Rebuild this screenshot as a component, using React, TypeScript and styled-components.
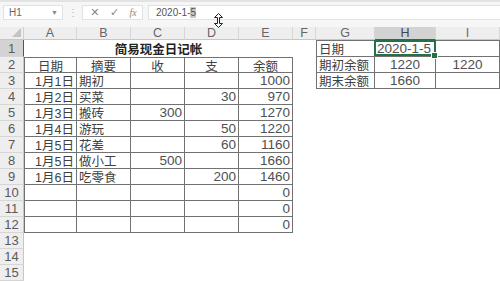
import styled, { createGlobalStyle } from 'styled-components';

const GlobalStyle = createGlobalStyle`
  html, body { margin: 0; padding: 0; background: #fff; }
  body { font-family: "Liberation Sans", "Noto Sans CJK SC", sans-serif; overflow: hidden; }
`;

const Window = styled.div`
  width: 500px;
  height: 282px;
  position: relative;
  overflow: hidden;
  background: #fff;
`;

const FormulaBar = styled.div`
  height: 27px;
  box-sizing: border-box;
  border-top: 2px solid #e3e3e3;
  background: #f6f6f6;
  display: flex;
  align-items: flex-start;
  padding: 3px 0 0 3px;
`;

const NameBox = styled.div`
  width: 60px;
  height: 15px;
  box-sizing: border-box;
  background: #fff;
  border: 1px solid #e2e2e2;
  display: flex;
  align-items: center;
  justify-content: space-between;
  padding: 0 4px 0 5px;
  font-size: 10px;
  color: #666;
`;

const Arrow = styled.span`
  font-size: 7px;
  color: #888;
`;

const Dots = styled.div`
  width: 19px;
  height: 15px;
  display: flex;
  align-items: center;
  justify-content: center;
  color: #b5b5b5;
  font-size: 10px;
`;

const ToolBox = styled.div`
  width: 61px;
  height: 15px;
  box-sizing: border-box;
  background: #fff;
  border: 1px solid #e2e2e2;
  display: flex;
  align-items: center;
  justify-content: space-around;
  padding-left: 2px;
  color: #888;
`;

const ToolIcon = styled.span<{ $serif?: boolean }>`
  font-size: ${p => (p.$serif ? '10px' : '11px')};
  font-family: ${p => (p.$serif ? '"Liberation Serif", serif' : '"DejaVu Sans", sans-serif')};
  font-style: ${p => (p.$serif ? 'italic' : 'normal')};
  line-height: 1;
`;

const FormulaInput = styled.div`
  flex: 1;
  height: 15px;
  margin-left: 5px;
  box-sizing: border-box;
  background: #fff;
  border: 1px solid #e2e2e2;
  border-right: none;
  display: flex;
  align-items: center;
  padding-left: 7px;
  font-size: 10px;
  color: #555;
`;

const Selected = styled.span`
  background: #c9c9c9;
`;

const Cursor = styled.svg`
  position: absolute;
  left: 214px;
  top: 13px;
`;

const Sheet = styled.div`
  display: grid;
  grid-template-columns: 24px 53px 54px 54px 54px 54px 23px 59px 61px 64px;
  grid-template-rows: 13px 17px repeat(14, 16px);
`;

const Corner = styled.div`
  background: #eeeeee;
  border-right: 1px solid #d0d0d0;
  border-bottom: 1px solid #c6c6c6;
  box-sizing: border-box;
  display: flex;
  align-items: flex-end;
  justify-content: flex-end;
  padding: 0 2px 2px 0;
`;

const ColHead = styled.div<{ $active?: boolean }>`
  box-sizing: border-box;
  background: ${p => (p.$active ? '#d3d3d3' : '#eeeeee')};
  border-right: 1px solid #d6d6d6;
  border-bottom: 1px solid ${p => (p.$active ? '#217346' : '#c6c6c6')};
  font-size: 12.5px;
  line-height: 12px;
  color: ${p => (p.$active ? '#444' : '#666')};
  text-align: center;
`;

const RowHead = styled.div<{ $active?: boolean }>`
  box-sizing: border-box;
  background: ${p => (p.$active ? '#d3d3d3' : '#eeeeee')};
  border-bottom: 1px solid #d6d6d6;
  border-right: 1px solid ${p => (p.$active ? '#217346' : '#c6c6c6')};
  font-size: 13px;
  color: #5a5a5a;
  display: flex;
  align-items: center;
  justify-content: center;
`;

type Align = 'left' | 'right' | 'center';

const Cell = styled.div<{
  $align?: Align;
  $boxed?: boolean;
  $top?: boolean;
  $left?: boolean;
  $span?: number;
  $bold?: boolean;
  $num?: boolean;
  $active?: boolean;
}>`
  position: relative;
  box-sizing: border-box;
  grid-column: ${p => (p.$span ? `span ${p.$span}` : 'auto')};
  border-right: ${p => (p.$boxed ? '1px solid #727272' : 'none')};
  border-bottom: ${p => (p.$boxed ? '1px solid #727272' : 'none')};
  border-top: ${p => (p.$top ? '1px solid #727272' : 'none')};
  border-left: ${p => (p.$left ? '1px solid #727272' : 'none')};
  display: flex;
  align-items: center;
  justify-content: ${p => (p.$align === 'right' ? 'flex-end' : p.$align === 'center' ? 'center' : 'flex-start')};
  padding: 0 2px;
  font-size: ${p => (p.$num ? '13.5px' : '12.5px')};
  font-weight: ${p => (p.$bold ? 700 : 400)};
  color: ${p => (p.$bold ? '#222' : p.$num ? '#505050' : '#404040')};
  white-space: nowrap;
  ${p =>
    p.$active &&
    `
    &::after {
      content: '';
      position: absolute;
      inset: -1px -1px 0 -1px;
      border: 2px solid #217346;
      pointer-events: none;
    }
    &::before {
      content: '';
      position: absolute;
      right: -3px;
      bottom: -3px;
      width: 5px;
      height: 5px;
      background: #217346;
      border: 1px solid #fff;
      z-index: 2;
    }
  `}
`;

const columns = ['A', 'B', 'C', 'D', 'E', 'F', 'G', 'H', 'I'];

const ledger: string[][] = [
  ['1月1日', '期初', '', '', '1000'],
  ['1月2日', '买菜', '', '30', '970'],
  ['1月3日', '搬砖', '300', '', '1270'],
  ['1月4日', '游玩', '', '50', '1220'],
  ['1月5日', '花差', '', '60', '1160'],
  ['1月5日', '做小工', '500', '', '1660'],
  ['1月6日', '吃零食', '', '200', '1460'],
  ['', '', '', '', '0'],
  ['', '', '', '', '0'],
  ['', '', '', '', '0'],
];

const summary: { label: string; h: string; i: string }[] = [
  { label: '日期', h: '2020-1-5', i: '' },
  { label: '期初余额', h: '1220', i: '1220' },
  { label: '期末余额', h: '1660', i: '' },
];

const ledgerAlign: Align[] = ['right', 'left', 'right', 'right', 'right'];
const headers = ['日期', '摘要', '收', '支', '余额'];

function SideCells({ row }: { row: number }) {
  const s = summary[row];
  if (!s) {
    return (
      <>
        <Cell />
        <Cell />
        <Cell />
      </>
    );
  }
  return (
    <>
      <Cell $boxed $left $top={row === 0} $align="left">{s.label}</Cell>
      <Cell $boxed $num $top={row === 0} $align={row === 0 ? 'left' : 'center'} $active={row === 0}>
        {s.h}
      </Cell>
      <Cell $boxed $num $top={row === 0} $align="center">{s.i}</Cell>
    </>
  );
}

export default function App() {
  const rows = [];
  for (let r = 1; r <= 15; r++) {
    let ledgerCells;
    if (r === 1) {
      ledgerCells = (
        <Cell $span={5} $align="center" $bold>
          简易现金日记帐
        </Cell>
      );
    } else if (r === 2) {
      ledgerCells = headers.map((h, i) => (
        <Cell key={h} $boxed $top $left={i === 0} $align="center">
          {h}
        </Cell>
      ));
    } else if (r <= 12) {
      ledgerCells = ledger[r - 3].map((v, i) => (
        <Cell key={i} $boxed $num={i >= 2} $left={i === 0} $align={ledgerAlign[i]}>
          {v}
        </Cell>
      ));
    } else {
      ledgerCells = [0, 1, 2, 3, 4].map(i => <Cell key={i} />);
    }
    rows.push(
      <RowHead key={`h${r}`} $active={r === 1}>{r}</RowHead>,
      ledgerCells,
      <Cell key={`f${r}`} />,
      <SideCells key={`s${r}`} row={r - 1} />
    );
  }

  return (
    <Window>
      <GlobalStyle />
      <FormulaBar>
        <NameBox>
          H1
          <Arrow>▼</Arrow>
        </NameBox>
        <Dots>⋮</Dots>
        <ToolBox>
          <ToolIcon>✕</ToolIcon>
          <ToolIcon>✓</ToolIcon>
          <ToolIcon $serif>fx</ToolIcon>
        </ToolBox>
        <FormulaInput>
          2020-1-<Selected>5</Selected>
        </FormulaInput>
      </FormulaBar>
      <Cursor width="9" height="15" viewBox="0 0 9 15">
        <path
          d="M4.5 0.5 L8.5 4.5 L5.5 4.5 L5.5 10.5 L8.5 10.5 L4.5 14.5 L0.5 10.5 L3.5 10.5 L3.5 4.5 L0.5 4.5 Z"
          fill="#fff"
          stroke="#222"
          strokeWidth="1"
        />
      </Cursor>
      <Sheet>
        <Corner>
          <svg width="9" height="9" viewBox="0 0 9 9">
            <path d="M9 0 L9 9 L0 9 Z" fill="#c4c4c4" />
          </svg>
        </Corner>
        {columns.map(c => (
          <ColHead key={c} $active={c === 'H'}>
            {c}
          </ColHead>
        ))}
        {rows}
      </Sheet>
    </Window>
  );
}
